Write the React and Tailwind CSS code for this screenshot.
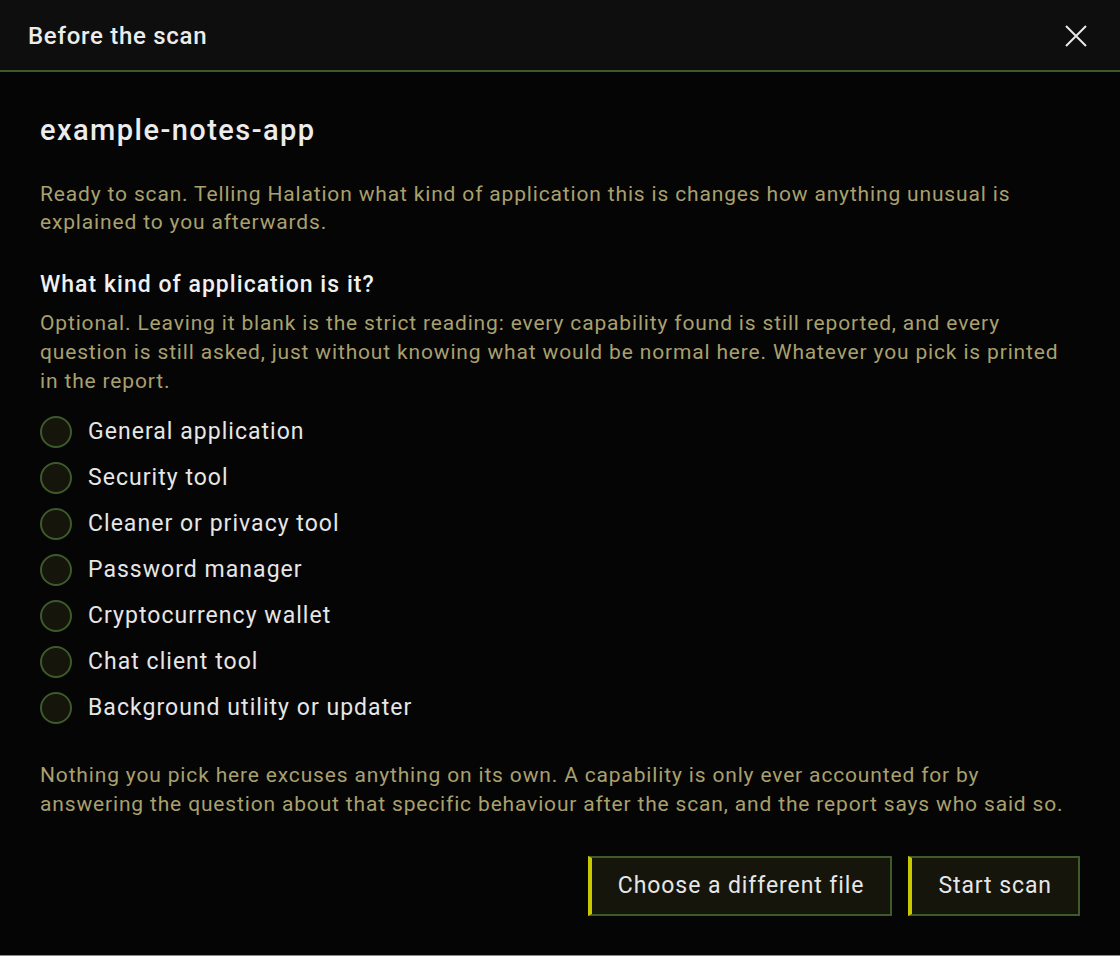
import React, { useState } from 'react';

const kinds = [
  'General application',
  'Security tool',
  'Cleaner or privacy tool',
  'Password manager',
  'Cryptocurrency wallet',
  'Chat client tool',
  'Background utility or updater',
];

export default function App() {
  const [kind, setKind] = useState(null);

  return (
    <div className="min-h-screen bg-[#050505] font-['Roboto',sans-serif]">
      <div className="flex h-[956px] flex-col border-b border-[#8a8a8a]">
        {/* Header */}
        <div className="flex h-[72px] items-center justify-between border-b-2 border-[#3e5a2b] bg-[#0e0e0e] pl-7 pr-[32px]">
          <h2 className="pt-[2px] text-[24px] font-medium tracking-[0.03em] text-[#ececec]">Before the scan</h2>
          <button className="pt-[2px] text-[#e8e8e8]" aria-label="Close">
            <svg width="24" height="24" viewBox="0 0 24 24" fill="none" stroke="currentColor" strokeWidth="2">
              <path d="M2 2l20 20M22 2L2 22" />
            </svg>
          </button>
        </div>

        {/* Body */}
        <div className="flex flex-1 flex-col px-10 pt-[38px]">
          <h1 className="text-[29px] font-medium leading-[40px] tracking-[0.05em] text-[#ececec]">
            example-notes-app
          </h1>

          <p className="mt-[30px] text-[21px] leading-[28px] tracking-[0.04em] text-[#a9a06e]">
            Ready to scan. Telling Halation what kind of application this is changes how anything unusual is
            explained to you afterwards.
          </p>

          <h3 className="mt-[34px] text-[23px] font-medium leading-[30px] tracking-[0.045em] text-[#f0f0f0]">
            What kind of application is it?
          </h3>
          <p className="mt-[9px] text-[21px] leading-[29px] tracking-[0.04em] text-[#a9a06e]">
            Optional. Leaving it blank is the strict reading: every capability found is still reported, and every
            question is still asked, just without knowing what would be normal here. Whatever you pick is printed
            in the report.
          </p>

          {/* Radios */}
          <div className="mt-[20px] flex flex-col gap-[14px]">
            {kinds.map((k) => (
              <label key={k} className="flex cursor-pointer items-center gap-4" onClick={() => setKind(k)}>
                <span className="flex h-8 w-8 items-center justify-center rounded-full border-2 border-[#3e5a2b] bg-[#15150c]">
                  {kind === k && <span className="h-3 w-3 rounded-full bg-[#c8c800]" />}
                </span>
                <span className="text-[23px] leading-8 tracking-[0.045em] text-[#e6e6e6]">{k}</span>
              </label>
            ))}
          </div>

          <p className="mt-[37px] text-[21px] leading-[29px] tracking-[0.04em] text-[#a9a06e]">
            Nothing you pick here excuses anything on its own. A capability is only ever accounted for by
            answering the question about that specific behaviour after the scan, and the report says who said so.
          </p>

          {/* Actions */}
          <div className="mt-[37px] flex justify-end gap-4">
            <button className="h-[60px] border-2 border-l-4 border-[#3e5a2b] border-l-[#c8c800] bg-[#15150c] px-[26px] text-[23px] tracking-[0.04em] text-[#e6e6e6]">
              Choose a different file
            </button>
            <button className="h-[60px] border-2 border-l-4 border-[#3e5a2b] border-l-[#c8c800] bg-[#15150c] px-[26px] text-[23px] tracking-[0.04em] text-[#e6e6e6]">
              Start scan
            </button>
          </div>
        </div>
      </div>
    </div>
  );
}
